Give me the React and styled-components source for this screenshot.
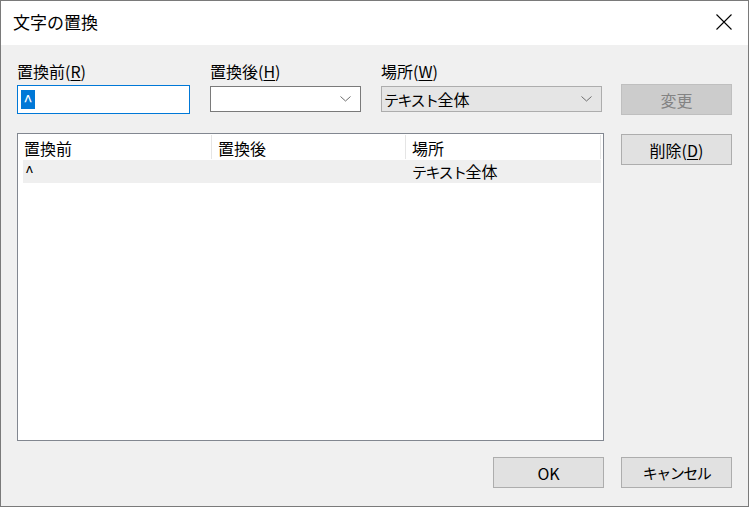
import React from "react";
import styled, { createGlobalStyle } from "styled-components";

const GlobalStyle = createGlobalStyle`
  html, body {
    margin: 0;
    padding: 0;
    background: #ffffff;
  }
  body {
    font-family: "Noto Sans CJK JP", "Noto Sans", sans-serif;
    font-size: 16px;
    color: #000000;
  }
`;

function Chevron() {
  return (
    <svg width="11" height="6" viewBox="0 0 11 6">
      <polyline points="0.5,0.5 5.5,5 10.5,0.5" fill="none" stroke="#6d6d6d" strokeWidth="1" />
    </svg>
  );
}

function CloseIcon() {
  return (
    <svg width="16" height="16" viewBox="0 0 16 16">
      <path d="M0.5 0.5 L15.5 15.5 M15.5 0.5 L0.5 15.5" stroke="#000" strokeWidth="1.1" />
    </svg>
  );
}

function App() {
  return (
    <>
      <GlobalStyle />
      <Window>
        <TitleBar>
          <Title>文字の置換</Title>
          <CloseButton>
            <CloseIcon />
          </CloseButton>
        </TitleBar>
        <Body>
          <MainColumn>
            <FieldRow>
              <Field width="173px">
                <Label>
                  置換前(<u>R</u>)
                </Label>
                <TextInput>
                  <Selected>^</Selected>
                </TextInput>
              </Field>
              <Field width="151px">
                <Label>
                  置換後(<u>H</u>)
                </Label>
                <Combo>
                  <ComboText />
                  <Chevron />
                </Combo>
              </Field>
              <Field width="221px">
                <Label>
                  場所(<u>W</u>)
                </Label>
                <Combo locked>
                  <ComboText>
                    <Kana>テキスト</Kana>全体
                  </ComboText>
                  <Chevron />
                </Combo>
              </Field>
            </FieldRow>
            <ListView>
              <HeaderRow>
                <HeaderCell width="189px">置換前</HeaderCell>
                <HeaderCell width="194px">置換後</HeaderCell>
                <HeaderCell>場所</HeaderCell>
              </HeaderRow>
              <ItemRow>
                <Cell width="189px">^</Cell>
                <Cell width="194px"></Cell>
                <Cell>
                  <Kana>テキスト</Kana>全体
                </Cell>
              </ItemRow>
            </ListView>
            <Footer>
              <Button>OK</Button>
            </Footer>
          </MainColumn>
          <SideColumn>
            <Button disabled>変更</Button>
            <Button>
              削除(<u>D</u>)
            </Button>
            <Button bottom>
              <Kana>キャンセル</Kana>
            </Button>
          </SideColumn>
        </Body>
      </Window>
    </>
  );
}

const Window = styled.div`
  width: 749px;
  height: 507px;
  box-sizing: border-box;
  border: 1px solid #7a7a7a;
  display: flex;
  flex-direction: column;
  background: #f0f0f0;
`;

const TitleBar = styled.div`
  height: 44px;
  background: #ffffff;
  display: flex;
  align-items: center;
  justify-content: space-between;
  padding: 0 16px 0 12px;
  flex-shrink: 0;
`;

const Title = styled.div`
  font-size: 17px;
  line-height: 20px;
  padding-bottom: 2px;
`;

const CloseButton = styled.div`
  width: 16px;
  height: 16px;
  display: flex;
  margin-bottom: 2px;
`;

const Body = styled.div`
  flex: 1;
  display: flex;
  gap: 17px;
  padding: 16px 0 18px 16px;
`;

const MainColumn = styled.div`
  width: 587px;
  display: flex;
  flex-direction: column;
`;

const FieldRow = styled.div`
  display: flex;
  gap: 20px;
`;

const Field = styled.div`
  width: ${(p) => p.width};
  display: flex;
  flex-direction: column;
`;

const Label = styled.div`
  line-height: 20px;
  height: 20px;
  margin-bottom: 4px;
  white-space: nowrap;
  u {
    text-underline-offset: 2px;
  }
`;

const Kana = styled.span`
  font-size: 15px;
  letter-spacing: -1.5px;
`;

const TextInput = styled.div`
  height: 29px;
  box-sizing: border-box;
  border: 1px solid #0078d7;
  background: #ffffff;
  display: flex;
  align-items: center;
  padding-left: 3px;
`;

const Selected = styled.span`
  background: #0078d7;
  color: #ffffff;
  width: 14px;
  height: 19px;
  line-height: 21px;
  text-align: center;
  font-size: 17px;
`;

const Combo = styled.div`
  margin-top: 1px;
  height: 26px;
  box-sizing: border-box;
  border: 1px solid ${(p) => (p.locked ? "#adadad" : "#7a7a7a")};
  background: ${(p) => (p.locked ? "#e5e5e5" : "#ffffff")};
  display: flex;
  align-items: center;
  justify-content: space-between;
  padding: 0 9px 0 2px;
`;

const ComboText = styled.span`
  line-height: 20px;
  white-space: nowrap;
`;

const ListView = styled.div`
  margin-top: 19px;
  height: 308px;
  box-sizing: border-box;
  border: 1px solid #828790;
  background: #ffffff;
  padding: 0 2px 0 5px;
`;

const HeaderRow = styled.div`
  display: flex;
  height: 26px;
`;

const HeaderCell = styled.div`
  width: ${(p) => p.width || "auto"};
  flex: ${(p) => (p.width ? "none" : "1")};
  box-sizing: border-box;
  border-right: 1px solid #e5e5e5;
  padding: 3px 0 0 6px;
  line-height: 20px;
  margin-top: 1px;
  height: 24px;
  &:first-child {
    padding-left: 1px;
  }
`;

const ItemRow = styled.div`
  display: flex;
  height: 23px;
  background: #efefef;
`;

const Cell = styled.div`
  width: ${(p) => p.width || "auto"};
  flex: ${(p) => (p.width ? "none" : "1")};
  box-sizing: border-box;
  padding: 1px 0 0 6px;
  line-height: 20px;
  &:first-child {
    padding-left: 2px;
  }
`;

const Footer = styled.div`
  margin-top: auto;
  display: flex;
  justify-content: flex-end;
`;

const SideColumn = styled.div`
  width: 111px;
  display: flex;
  flex-direction: column;
  gap: 19px;
  padding-top: 23px;
`;

const Button = styled.div`
  height: 31px;
  box-sizing: border-box;
  width: 111px;
  display: flex;
  align-items: center;
  justify-content: center;
  border: 1px solid ${(p) => (p.disabled ? "#bfbfbf" : "#adadad")};
  background: ${(p) => (p.disabled ? "#cccccc" : "#e1e1e1")};
  color: ${(p) => (p.disabled ? "#838383" : "#000000")};
  line-height: 20px;
  margin-top: ${(p) => (p.bottom ? "auto" : "0")};
  u {
    text-underline-offset: 2px;
  }
`;

export default App;
